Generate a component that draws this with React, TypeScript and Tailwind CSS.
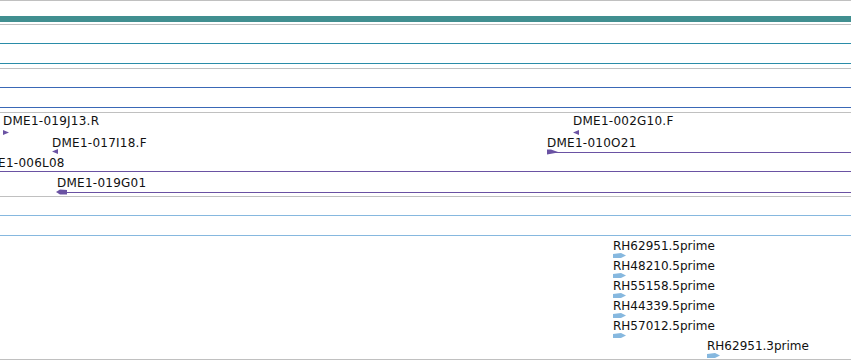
import React from 'react';

// Genome browser track panel — tracks stack in flow, features sit on the track canvas.

type Dir = 'left' | 'right';

interface Feat {
  label: string;
  x: number; // label left
  y: number; // label top
  ax: number; // glyph left
  ay: number; // glyph top
  dir: Dir;
  kind: 'tick' | 'long';
  lineY?: number;
}

const PURPLE = '#6a52a3';

const cloneFeats: Feat[] = [
  { label: 'DME1-019J13.R', x: 3, y: 1, ax: 3, ay: 17, dir: 'right', kind: 'tick' },
  { label: 'DME1-017I18.F', x: 52, y: 23, ax: 52, ay: 36, dir: 'left', kind: 'tick' },
  { label: 'DME1-006L08', x: -22, y: 43, ax: -40, ay: 0, dir: 'left', kind: 'tick' },
  { label: 'DME1-019G01', x: 57, y: 63, ax: 56, ay: 76, dir: 'left', kind: 'long', lineY: 79 },
  { label: 'DME1-002G10.F', x: 573, y: 1, ax: 573, ay: 17, dir: 'left', kind: 'tick' },
  { label: 'DME1-010O21', x: 547, y: 23, ax: 547, ay: 36, dir: 'right', kind: 'long', lineY: 39 },
];

const estFeats = [
  { label: 'RH62951.5prime', x: 613, y: 3 },
  { label: 'RH48210.5prime', x: 613, y: 23 },
  { label: 'RH55158.5prime', x: 613, y: 43 },
  { label: 'RH44339.5prime', x: 613, y: 63 },
  { label: 'RH57012.5prime', x: 613, y: 83 },
  { label: 'RH62951.3prime', x: 707, y: 103 },
];

function Glyph({ dir, kind }: { dir: Dir; kind: 'tick' | 'long' }) {
  if (kind === 'tick') {
    return (
      <svg width="6" height="5" viewBox="0 0 6 5">
        {dir === 'right' ? (
          <polygon points="0,0 6,2.5 0,5" fill={PURPLE} />
        ) : (
          <polygon points="6,0 0,2.5 6,5" fill={PURPLE} />
        )}
      </svg>
    );
  }
  return (
    <svg width="11" height="6" viewBox="0 0 11 6">
      {dir === 'right' ? (
        <polygon points="0,0.5 4,0.5 11,3 11,3.5 0,5.5" fill={PURPLE} />
      ) : (
        <polygon points="0,3 4,0.5 11,1 11,5.5 4,5.5" fill={PURPLE} />
      )}
    </svg>
  );
}

function EstGlyph() {
  return (
    <svg width="13" height="5" viewBox="0 0 13 5">
      <polygon points="0,1 8,0 13,2.5 8,5 0,5" fill="#86b8df" />
    </svg>
  );
}

function LineTrack({ color }: { color: string }) {
  return (
    <div className="border-t border-[#c0c0c0]">
      <div className="h-[18px]" />
      <div className="h-px" style={{ background: color }} />
      <div className="h-[19px]" />
      <div className="h-px" style={{ background: color }} />
      <div className="h-[4px]" />
    </div>
  );
}

export default function App() {
  return (
    <div
      className="w-[851px] h-[361px] overflow-hidden bg-white text-[12px] leading-[14px] text-[#111]"
      style={{ fontFamily: '"DejaVu Sans", sans-serif' }}
    >
      {/* sequence/ruler track */}
      <div className="border-t border-[#c0c0c0]">
        <div className="h-[15px]" />
        <div className="h-[6px] bg-[#418f90]" />
        <div className="h-[2px]" />
      </div>

      <LineTrack color="#2a8ca8" />
      <LineTrack color="#3a68b6" />

      {/* BAC clone ends */}
      <div className="border-t border-[#c0c0c0] tracking-[0.25px]">
        <div className="relative h-[83px]">
          <div className="absolute left-0 right-0 top-[58px] h-px" style={{ background: PURPLE }} />
          {cloneFeats.map(f => (
            <React.Fragment key={f.label}>
              {f.lineY !== undefined && (
                <div
                  className="absolute right-0 h-px"
                  style={{ left: f.ax + 2, top: f.lineY, background: PURPLE }}
                />
              )}
              <div className="absolute whitespace-nowrap" style={{ left: f.x, top: f.y }}>
                {f.label}
              </div>
              <div className="absolute flex" style={{ left: f.ax, top: f.ay }}>
                <Glyph dir={f.dir} kind={f.kind} />
              </div>
            </React.Fragment>
          ))}
        </div>
      </div>

      {/* ESTs */}
      <div className="border-t border-[#c0c0c0]">
        <div className="h-[18px]" />
        <div className="h-px bg-[#86b8df]" />
        <div className="h-[19px]" />
        <div className="h-px bg-[#86b8df]" />
        <div className="relative h-[123px]">
          {estFeats.map(f => (
            <React.Fragment key={f.label}>
              <div className="absolute whitespace-nowrap" style={{ left: f.x, top: f.y }}>
                {f.label}
              </div>
              <div className="absolute flex" style={{ left: f.x, top: f.y + 14 }}>
                <EstGlyph />
              </div>
            </React.Fragment>
          ))}
        </div>
      </div>
      <div className="border-t border-[#c0c0c0]" />
    </div>
  );
}
